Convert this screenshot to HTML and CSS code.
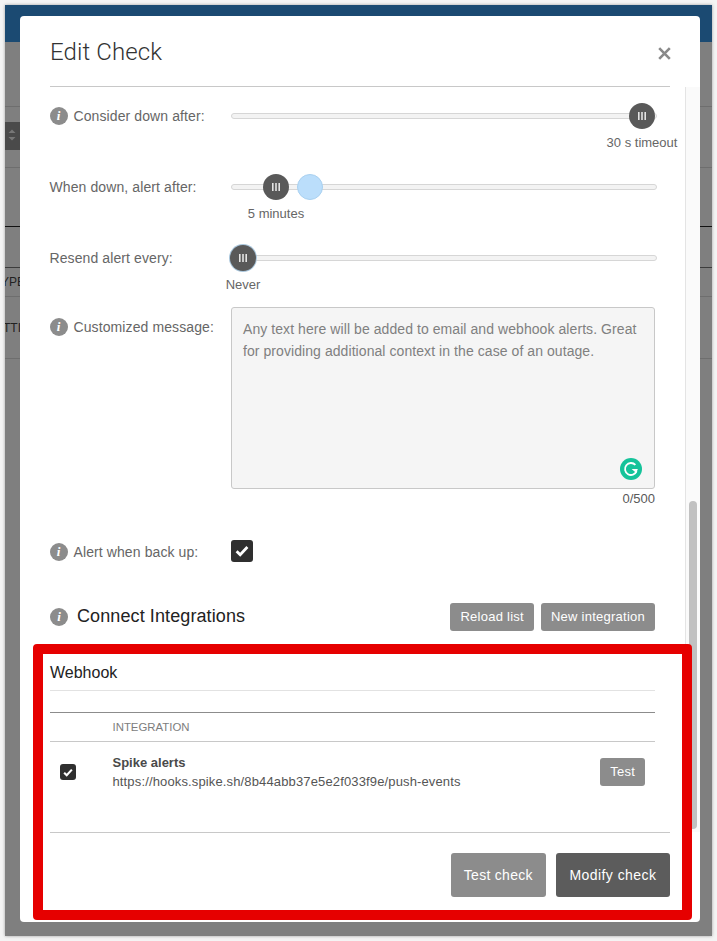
FILE: index.html
```html
<!DOCTYPE html>
<html lang="en">
<head>
<meta charset="utf-8">
<title>Edit Check</title>
<link rel="stylesheet" href="styles.css">
</head>
<body>
<div class="page">
  <div class="bg-nav"></div>
  <div class="bg-row bg-h64"></div>
  <div class="bg-row bg-h61"><span class="bg-sort"><svg width="15" height="28" viewBox="0 0 15 28"><path d="M7 7.5l3.5 3.5h-7zM7 18.5l3.5-3.5h-7z" fill="#777"/></svg></span></div>
  <div class="bg-row bg-h59 bg-black"></div>
  <div class="bg-row bg-h41 bg-dark"></div>
  <div class="bg-row bg-h29"><span class="bg-text">YPE</span></div>
  <div class="bg-row bg-h62"><span class="bg-text bg-text-b">TTI</span></div>

  <div class="modal">
    <header class="modal-head">
      <h1 class="modal-title">Edit Check</h1>
      <svg class="close" width="13" height="13" viewBox="0 0 13 13"><path d="M1.2 1.2l10.6 10.6M11.8 1.2L1.2 11.8" stroke="#8a8a8a" stroke-width="2.6" fill="none"/></svg>
    </header>

    <div class="modal-body">
      <div class="form">
        <div class="row row-slider">
          <div class="label"><span class="info">i</span>Consider down after:</div>
          <div class="slider">
            <div class="track"></div>
            <div class="handle" style="left:411px"><svg width="8" height="8" viewBox="0 0 8 8"><path d="M0 0h1.6v8H0zM3.2 0h1.6v8H3.2zM6.4 0H8v8H6.4z" fill="#e4e4e4"/></svg></div>
            <div class="value" style="left:411px">30 s timeout</div>
          </div>
        </div>
        <div class="row row-slider">
          <div class="label">When down, alert after:</div>
          <div class="slider">
            <div class="track"></div>
            <div class="handle" style="left:45px"><svg width="8" height="8" viewBox="0 0 8 8"><path d="M0 0h1.6v8H0zM3.2 0h1.6v8H3.2zM6.4 0H8v8H6.4z" fill="#e4e4e4"/></svg></div>
            <div class="focus-dot" style="left:79px"></div>
            <div class="value" style="left:45px">5 minutes</div>
          </div>
        </div>
        <div class="row row-slider">
          <div class="label">Resend alert every:</div>
          <div class="slider">
            <div class="track"></div>
            <div class="handle handle-min" style="left:12px"><svg width="8" height="8" viewBox="0 0 8 8"><path d="M0 0h1.6v8H0zM3.2 0h1.6v8H3.2zM6.4 0H8v8H6.4z" fill="#e4e4e4"/></svg></div>
            <div class="value" style="left:12px">Never</div>
          </div>
        </div>
        <div class="row row-message">
          <div class="label"><span class="info">i</span>Customized message:</div>
          <div class="message-col">
            <div class="textarea">Any text here will be added to email and webhook alerts. Great for providing additional context in the case of an outage.
              <svg class="grammarly" width="22" height="22" viewBox="0 0 22 22"><circle cx="11" cy="11" r="11" fill="#15c39a"/><path d="M15.4 6.9A6 6 0 1 0 16.6 13.2" stroke="#fff" stroke-width="1.8" fill="none"/><path d="M11.6 10.9h6.2l-1.5 4z" fill="#fff"/></svg>
            </div>
            <div class="counter">0/500</div>
          </div>
        </div>
        <div class="row row-check">
          <div class="label"><span class="info">i</span>Alert when back up:</div>
          <span class="check"><svg width="14" height="12" viewBox="0 0 14 12"><path d="M1.6 6.2l3.6 3.6 7.2-7.8" stroke="#fff" stroke-width="2.8" fill="none"/></svg></span>
        </div>
        <div class="section-head">
          <span class="info">i</span>
          <h2 class="section-title">Connect Integrations</h2>
          <div class="section-actions">
            <span class="btn btn-sm">Reload list</span>
            <span class="btn btn-sm">New integration</span>
          </div>
        </div>
        <h3 class="group-title">Webhook</h3>
        <div class="table">
          <div class="table-head">INTEGRATION</div>
          <div class="table-row">
            <span class="check check-sm"><svg width="10" height="9" viewBox="0 0 14 12"><path d="M1.6 6.2l3.6 3.6 7.2-7.8" stroke="#fff" stroke-width="3" fill="none"/></svg></span>
            <div class="int-info">
              <div class="int-name">Spike alerts</div>
              <div class="int-url">https://hooks.spike.sh/8b44abb37e5e2f033f9e/push-events</div>
            </div>
            <span class="btn btn-sm btn-test">Test</span>
          </div>
        </div>
      </div>
      <div class="scrollbar"><div class="thumb"></div></div>
    </div>

    <footer class="modal-foot">
      <span class="btn btn-lg">Test check</span>
      <span class="btn btn-lg btn-dark">Modify check</span>
    </footer>
  </div>
  <div class="highlight"></div>
</div>
</body>
</html>
```

FILE: styles.css
```css
* { box-sizing: border-box; }
html, body { margin: 0; height: 100%; }
body {
  background: #f4f4f4;
  font-family: "Liberation Sans", Arial, sans-serif;
  font-size: 13px;
  color: #595959;
  padding: 5px;
  overflow: hidden;
}
.page {
  position: relative;
  width: 707px;
  height: 931px;
  background: #7f7f7f;
  display: flex;
  flex-direction: column;
  overflow: hidden;
  box-shadow: 0 0 3px rgba(0,0,0,.35);
}
.bg-nav { height: 37px; background: #1b4a72; flex: none; }
.bg-row { flex: none; border-bottom: 1px solid #6e6e6e; display: flex; align-items: center; }
.bg-h64 { height: 65px; }
.bg-h61 { height: 61px; align-items: flex-start; padding-top: 15px; }
.bg-h59 { height: 59px; }
.bg-black { border-bottom-color: #111; }
.bg-h41 { height: 41px; }
.bg-dark { border-bottom-color: #3c3c3c; }
.bg-h29 { height: 29px; }
.bg-h62 { height: 62px; }
.bg-sort { display: block; width: 15px; height: 28px; background: #4a4a4a; }
.bg-sort svg { display: block; }
.bg-text { font-size: 12px; color: #222; margin-left: -4px; }
.bg-text-b { margin-left: -2px; }

.modal {
  position: absolute;
  left: 15px;
  top: 11px;
  width: 680px;
  height: 906px;
  background: #fff;
  border-radius: 4px;
  display: flex;
  flex-direction: column;
  overflow: hidden;
}
.modal-head {
  flex: none;
  height: 71px;
  margin: 0 30px;
  border-bottom: 1px solid #c8c8c8;
  display: flex;
  justify-content: space-between;
  padding-top: 21px;
}
.modal-title {
  margin: 0;
  font-family: Roboto, "Liberation Sans", sans-serif;
  font-weight: 300;
  font-size: 24px;
  letter-spacing: .1px;
  line-height: 30px;
  color: #333;
}
.close { margin-top: 10px; margin-right: -1px; }

.modal-body {
  flex: none;
  height: 745px;
  display: flex;
  overflow: hidden;
}
.form { flex: none; width: 665px; padding: 0 30px; }
.row { display: flex; }
.label {
  flex: none;
  width: 181px;
  font-size: 14px;
  letter-spacing: .1px;
  line-height: 18px;
  color: #666;
  display: flex;
  align-items: center;
  height: 18px;
  margin-left: -.5px;
  margin-right: .5px;
}
.info {
  flex: none;
  width: 18px;
  height: 18px;
  margin-right: 6px;
  border-radius: 50%;
  background: #8c8c8c;
  color: #fff;
  font: italic 700 13px/18px "Liberation Serif", serif;
  letter-spacing: 0;
  text-align: center;
}
.row-slider { height: 71px; padding-top: 20px; }
.slider { position: relative; flex: none; width: 426px; height: 40px; }
.track {
  height: 6px;
  margin-top: 6px;
  background: #f3f3f3;
  border: 1px solid #d6d6d6;
  border-radius: 3px;
}
.handle {
  position: absolute;
  top: -4px;
  width: 26px;
  height: 26px;
  margin-left: -13px;
  border-radius: 50%;
  background: #595959;
  display: flex;
  align-items: center;
  justify-content: center;
}
.handle-min { box-shadow: 0 0 0 1px #a9c6dc; }
.focus-dot {
  position: absolute;
  top: -4px;
  width: 26px;
  height: 26px;
  margin-left: -13px;
  border-radius: 50%;
  background: #bbdefb;
  border: 1px solid #a8d0f0;
}
.value {
  position: absolute;
  top: 28px;
  transform: translateX(-50%);
  white-space: nowrap;
  font-size: 13px;
  line-height: 16px;
  color: #666;
}
.row-message { padding-top: 7px; }
.row-message .label { margin-top: 11px; }
.message-col { flex: none; width: 424px; }
.textarea {
  position: relative;
  height: 182px;
  background: #f5f5f5;
  border: 1px solid #c8c8c8;
  border-radius: 3px;
  padding: 10px 11px;
  font-size: 14px;
  letter-spacing: .07px;
  line-height: 22px;
  color: #808080;
}
.grammarly { position: absolute; right: 12px; bottom: 8px; }
.counter { text-align: right; font-size: 13px; line-height: 16px; margin-top: 2px; }
.row-check { padding-top: 33px; align-items: center; }
.row-check .label { margin-top: 2px; }
.check {
  flex: none;
  width: 22px;
  height: 22px;
  border-radius: 3px;
  background: #2f2f2f;
  display: flex;
  align-items: center;
  justify-content: center;
}
.section-head { display: flex; align-items: center; height: 28px; margin-top: 41px; }
.section-title {
  margin: 0 0 2px 3px;
  font-weight: 400;
  font-size: 18px;
  letter-spacing: .1px;
  color: #222;
}
.section-actions { margin-left: auto; display: flex; gap: 7px; }
.btn {
  display: flex;
  align-items: center;
  justify-content: center;
  border-radius: 3px;
  background: #8c8c8c;
  color: #fff;
  white-space: nowrap;
}
.btn-sm { height: 28px; padding: 0 10px 1px; font-size: 13px; letter-spacing: .25px; }
.btn-lg { height: 44px; padding: 0 13px; font-size: 14px; letter-spacing: .3px; }
.btn-dark { background: #5c5c5c; padding: 0 13.5px; letter-spacing: .45px; }
.group-title {
  margin: 32px 0 0;
  height: 28px;
  font-weight: 400;
  font-size: 16px;
  line-height: 20px;
  color: #222;
  border-bottom: 1px solid #e2e2e2;
}
.table { margin-top: 21px; border-top: 1px solid #8c8c8c; }
.table-head {
  height: 29px;
  border-bottom: 1px solid #c8c8c8;
  padding-left: 62.5px;
  font-size: 11.4px;
  line-height: 28px;
  color: #7d7d7d;
}
.table-row { display: flex; align-items: flex-start; padding: 12px 10px 0; }
.check-sm { width: 16px; height: 16px; margin-top: 10px; }
.int-info { margin: -1px 0 0 36.5px; flex: 1; font-size: 13px; line-height: 19px; color: #555; }
.int-url { letter-spacing: .14px; }
.int-name { font-weight: 700; color: #4a4a4a; }
.btn-test { margin-top: 4px; }

.scrollbar {
  flex: none;
  width: 15px;
  background: #fafafa;
  border-left: 1px solid #e4e4e4;
  position: relative;
  padding: 414px 3px 3px 3px;
}
.thumb { height: 328px; border-radius: 4px; background: #c1c1c1; }

.modal-foot {
  flex: none;
  margin: 0 30px;
  border-top: 1px solid #c8c8c8;
  padding-top: 20px;
  display: flex;
  justify-content: flex-end;
  gap: 10px;
}
.highlight {
  position: absolute;
  left: 28px;
  top: 639px;
  width: 659px;
  height: 276px;
  border: 10px solid #e60000;
  border-radius: 4px;
  pointer-events: none;
}
```
